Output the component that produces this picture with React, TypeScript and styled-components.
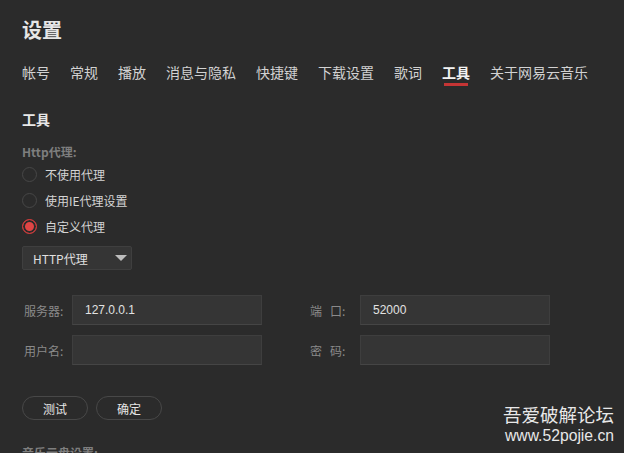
import React from "react";
import styled, { createGlobalStyle } from "styled-components";

const Global = createGlobalStyle`
  html, body { margin: 0; padding: 0; background: #2b2b2b; }
  body { font-family: "Noto Sans CJK SC", "Liberation Sans", sans-serif; overflow: hidden; }
`;

const Page = styled.div`
  position: relative;
  width: 624px;
  height: 453px;
  box-sizing: border-box;
  padding: 16px 22px 0;
  overflow: hidden;
  background: #2b2b2b;
  color: #cfcfcf;
`;

const Title = styled.h1`
  margin: 0;
  font-size: 20px;
  line-height: 28px;
  font-weight: 700;
  color: #e6e6e6;
`;

const Tabs = styled.nav`
  display: flex;
  gap: 20px;
  margin-top: 18px;
`;

const Tab = styled.div<{ $active?: boolean }>`
  position: relative;
  font-size: 14px;
  line-height: 20px;
  height: 24px;
  color: ${(p) => (p.$active ? "#f2f2f2" : "#d2d2d2")};
  font-weight: ${(p) => (p.$active ? 700 : 400)};
  white-space: nowrap;
  &::after {
    content: "";
    display: ${(p) => (p.$active ? "block" : "none")};
    position: absolute;
    left: 50%;
    transform: translateX(-50%);
    top: 21px;
    width: 24px;
    height: 3px;
    background: #c53535;
  }
`;

const Heading = styled.h2`
  margin: 23px 0 0;
  font-size: 14px;
  line-height: 20px;
  font-weight: 700;
  color: #e8e8e8;
`;

const SubLabel = styled.div`
  margin-top: 15px;
  font-size: 12px;
  line-height: 16px;
  font-weight: 700;
  color: #7e7e7e;
`;

const RadioList = styled.div`
  margin-top: 1px;
  display: flex;
  flex-direction: column;
`;

const RadioRow = styled.div`
  display: flex;
  align-items: center;
  gap: 8px;
  height: 26px;
  font-size: 12px;
  color: #d4d4d4;
`;

const RadioDot = styled.span<{ $checked?: boolean }>`
  box-sizing: border-box;
  width: 15px;
  height: 15px;
  border-radius: 50%;
  border: 1px solid ${(p) => (p.$checked ? "#d23b3b" : "#474747")};
  background: ${(p) => (p.$checked ? "#e04545" : "transparent")};
  box-shadow: ${(p) => (p.$checked ? "inset 0 0 0 2px #2b2b2b" : "none")};
`;

const Select = styled.div`
  margin-top: 7px;
  box-sizing: border-box;
  width: 110px;
  height: 24px;
  display: flex;
  align-items: center;
  justify-content: space-between;
  padding: 0 4px 0 10px;
  background: #353535;
  border: 1px solid #3f3f3f;
  border-radius: 2px;
  font-size: 12px;
  color: #e0e0e0;
`;

const Caret = styled.span`
  width: 0;
  height: 0;
  border-left: 6px solid transparent;
  border-right: 6px solid transparent;
  border-top: 6px solid #bdbdbd;
`;

const Form = styled.div`
  margin-top: 25px;
  display: grid;
  grid-template-columns: 50px 190px 98px 190px;
  row-gap: 10px;
  align-items: center;
`;

const FieldLabel = styled.label<{ $second?: boolean }>`
  font-size: 12px;
  color: #8a8a8a;
  padding-left: ${(p) => (p.$second ? "48px" : "2px")};
  white-space: pre;
`;

const Input = styled.div`
  box-sizing: border-box;
  height: 30px;
  display: flex;
  align-items: center;
  padding: 0 12px;
  background: #353535;
  border: 1px solid #3e3e3e;
  border-bottom-color: #454545;
  font-size: 12px;
  color: #e2e2e2;
  font-family: "Liberation Sans", "Noto Sans CJK SC", sans-serif;
`;

const Buttons = styled.div`
  margin-top: 31px;
  display: flex;
  gap: 8px;
`;

const Button = styled.button`
  box-sizing: border-box;
  width: 66px;
  height: 24px;
  border-radius: 12px;
  border: 1px solid #484848;
  background: transparent;
  color: #e6e6e6;
  font-size: 12px;
  font-family: "Noto Sans CJK SC", sans-serif;
  padding: 0;
`;

const Footer = styled.div`
  margin-top: 25px;
  font-size: 12px;
  line-height: 16px;
  font-weight: 700;
  color: #7e7e7e;
`;

const Watermark = styled.div`
  position: absolute;
  right: 10px;
  bottom: 7px;
  display: flex;
  flex-direction: column;
  align-items: flex-end;
  color: #e8e8e8;
`;

const WmTitle = styled.div`
  font-size: 18.5px;
  line-height: 24px;
`;

const WmUrl = styled.div`
  font-family: "Liberation Sans", sans-serif;
  font-size: 15.7px;
  line-height: 20px;
`;

const tabs = ["帐号", "常规", "播放", "消息与隐私", "快捷键", "下载设置", "歌词", "工具", "关于网易云音乐"];
const radios = [
  { label: "不使用代理", checked: false },
  { label: "使用IE代理设置", checked: false },
  { label: "自定义代理", checked: true },
];

export default function App() {
  return (
    <>
      <Global />
      <Page>
        <Title>设置</Title>
        <Tabs>
          {tabs.map((t) => (
            <Tab key={t} $active={t === "工具"}>{t}</Tab>
          ))}
        </Tabs>
        <Heading>工具</Heading>
        <SubLabel>Http代理:</SubLabel>
        <RadioList>
          {radios.map((r) => (
            <RadioRow key={r.label}>
              <RadioDot $checked={r.checked} />
              {r.label}
            </RadioRow>
          ))}
        </RadioList>
        <Select>
          HTTP代理
          <Caret />
        </Select>
        <Form>
          <FieldLabel>服务器:</FieldLabel>
          <Input>127.0.0.1</Input>
          <FieldLabel $second>{"端   口:"}</FieldLabel>
          <Input>52000</Input>
          <FieldLabel>用户名:</FieldLabel>
          <Input />
          <FieldLabel $second>{"密   码:"}</FieldLabel>
          <Input />
        </Form>
        <Buttons>
          <Button>测试</Button>
          <Button>确定</Button>
        </Buttons>
        <Footer>音乐云盘设置:</Footer>
        <Watermark>
          <WmTitle>吾爱破解论坛</WmTitle>
          <WmUrl>www.52pojie.cn</WmUrl>
        </Watermark>
      </Page>
    </>
  );
}
